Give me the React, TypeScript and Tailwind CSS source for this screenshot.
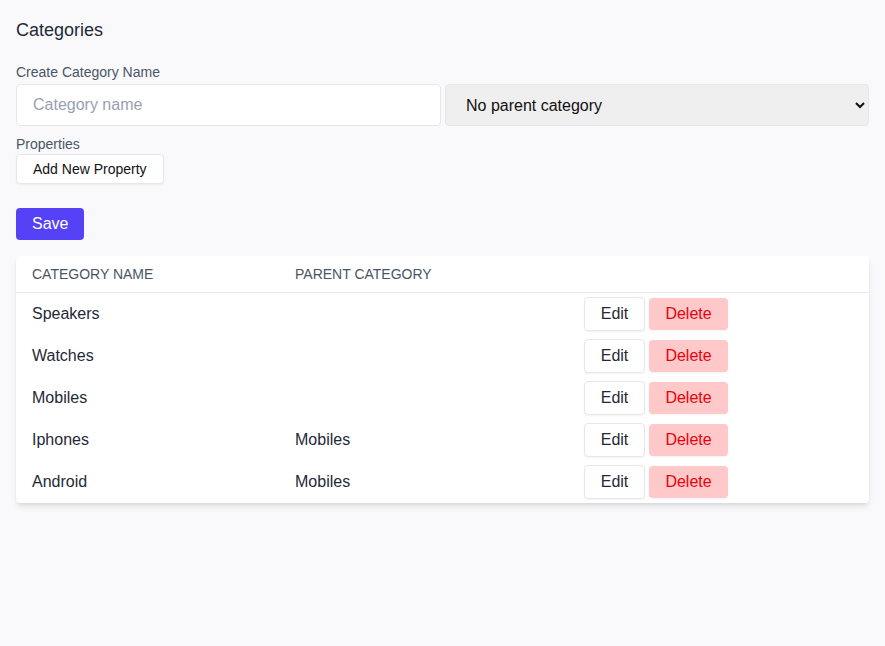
const categories = [
  { name: "Speakers", parent: "" },
  { name: "Watches", parent: "" },
  { name: "Mobiles", parent: "" },
  { name: "Iphones", parent: "Mobiles" },
  { name: "Android", parent: "Mobiles" },
];

export default function App() {
  return (
    <main className="min-h-[646px] bg-[#f9f9fc] p-4 font-['Liberation_Sans',Arial,sans-serif] text-[#1f2937]">
      <h1 className="text-lg leading-7 mb-[18px]">Categories</h1>

      <label className="block text-sm text-gray-600 leading-5 mb-[2px]">Create Category Name</label>
      <div className="flex gap-1 mb-2">
        <input
          type="text"
          placeholder="Category name"
          className="w-[425px] shrink-0 h-[42px] bg-white border border-gray-200 rounded-sm px-4 text-base placeholder:text-gray-400 outline-none"
        />
        <select className="flex-1 min-w-0 h-[42px] bg-[#efefef] border border-gray-200 rounded-sm pl-[16px] pr-2 text-base text-[#111]">
          <option>No parent category</option>
        </select>
      </div>

      <label className="block text-sm text-gray-600 leading-5">Properties</label>
      <button className="h-[30px] bg-white border border-gray-200 rounded-sm px-4 text-sm text-[#111] shadow-xs">
        Add New Property
      </button>

      <div className="mt-6">
        <button className="h-8 bg-[#5542f6] text-white rounded-sm px-4 text-base">Save</button>
      </div>

      <table className="w-full mt-4 bg-white rounded-sm shadow-md text-left border-collapse">
        <thead>
          <tr className="h-[36px] border-b border-gray-200">
            <th className="w-[263px] px-4 text-sm font-normal uppercase text-gray-600">Category name</th>
            <th className="w-[289px] px-4 text-sm font-normal uppercase text-gray-600">Parent category</th>
            <th className="px-4"></th>
          </tr>
        </thead>
        <tbody>
          {categories.map((c, i) => (
            <tr key={c.name} className={i === 0 ? "h-[43px]" : "h-[42px]"}>
              <td className="px-4 text-base">{c.name}</td>
              <td className="px-4 text-base">{c.parent}</td>
              <td className="px-4">
                <div className="flex items-center gap-1">
                  <button className="h-[34px] w-[61px] bg-white border border-gray-200 rounded-sm text-base text-[#1f2937] shadow-xs">
                    Edit
                  </button>
                  <button className="h-[32px] w-[79px] bg-red-200 rounded-sm text-base text-red-600 shadow-xs">
                    Delete
                  </button>
                </div>
              </td>
            </tr>
          ))}
        </tbody>
      </table>
    </main>
  );
}
